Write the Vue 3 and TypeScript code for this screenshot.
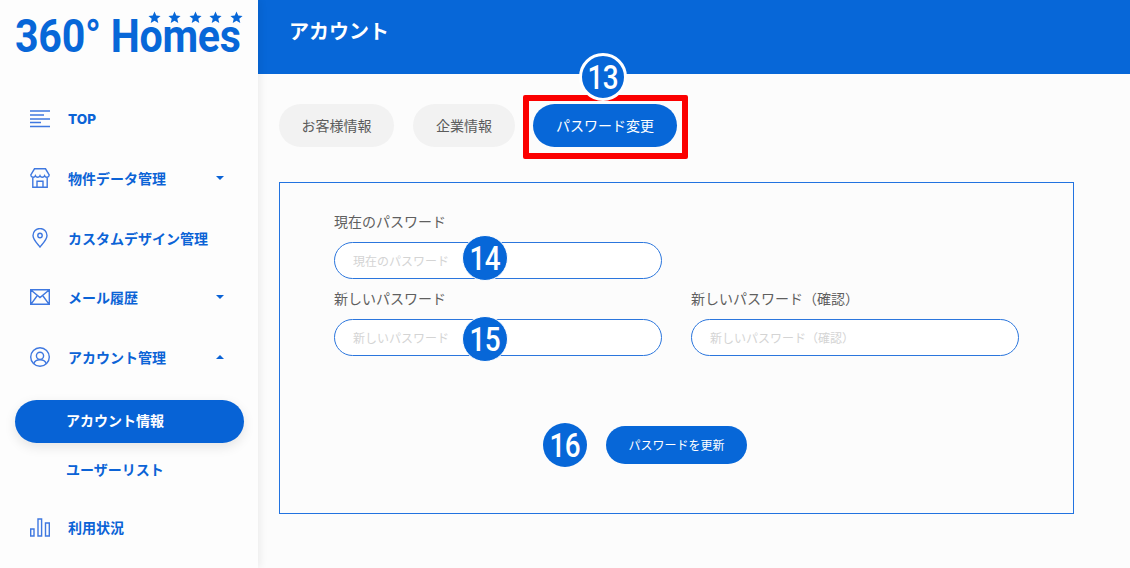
<script setup lang="ts">
const stars = [0, 1, 2, 3, 4]
</script>

<template>
  <div class="page">
    <aside class="sidebar">
      <div class="logo">
        <span class="logo-text">360° Homes</span>
        <span class="stars">
          <svg v-for="s in stars" :key="s" viewBox="0 0 24 24" width="13" height="13"><path fill="#0767d8" d="M12 1l3.200 7.400 8 .7-6.100 5.200 1.900 7.800L12 18l-7 4.100 1.900-7.800L.8 9.100l8-.7z" /></svg>
        </span>
      </div>
      <nav class="nav">
        <a class="item">
          <svg class="icon" viewBox="0 0 20 20"><path d="M0 2h20M0 6h14M0 10h20M0 13.500h11M0 17.500h20" /></svg>
          <span class="latin">TOP</span>
        </a>
        <a class="item">
          <svg class="icon" viewBox="0 0 20 20"><path d="M4.500 .8h11L19.200 7a2.400 2.400 0 0 1-4.600.8 2.500 2.500 0 0 1-4.600 0 2.500 2.500 0 0 1-4.600 0A2.400 2.400 0 0 1 .8 7zM2.800 10v9.300h14.400V10M7 19.300v-6h6v6" /></svg>
          <span>物件データ管理</span>
          <i class="caret" />
        </a>
        <a class="item">
          <svg class="icon" viewBox="0 0 20 20"><path d="M10 19C6.500 14.800 3 11.500 3 7.500a7 7 0 0 1 14 0c0 4-3.500 7.300-7 11.500z" /><circle cx="10" cy="7.500" r="2.200" /></svg>
          <span>カスタムデザイン管理</span>
        </a>
        <a class="item">
          <svg class="icon" viewBox="0 0 20 20"><path d="M.7 2.700h18.600v14.600H.7zM1.200 3.200 10 10.500l8.800-7.300M1.200 16.800 7 9M18.800 16.800 13 9" /></svg>
          <span>メール履歴</span>
          <i class="caret" />
        </a>
        <a class="item">
          <svg class="icon" viewBox="0 0 20 20"><circle cx="10" cy="10" r="9.300" /><circle cx="10" cy="8.800" r="3.600" /><path d="M3.800 16.800c.8-3 3.200-4 6.200-4s5.400 1 6.200 4" /></svg>
          <span>アカウント管理</span>
          <i class="caret up" />
        </a>
        <a class="sub active">アカウント情報</a>
        <a class="sub">ユーザーリスト</a>
        <a class="item last">
          <svg class="icon" viewBox="0 0 20 20"><path d="M.7 12h3.300v7H.7zM8 2h3.600v17H8zM15.500 6h3.800v13h-3.800z" /></svg>
          <span>利用状況</span>
        </a>
      </nav>
    </aside>

    <main class="main">
      <header class="topbar">アカウント</header>
      <div class="content">
        <div class="tabs">
          <button class="tab wide">お客様情報</button>
          <button class="tab narrow">企業情報</button>
          <div class="tab-mark">
            <button class="tab current">パスワード変更</button>
            <span class="red-box" />
            <span class="num num-13"><b>13</b></span>
          </div>
        </div>

        <section class="card">
          <div class="fields">
            <label class="field">
              <span class="label">現在のパスワード</span>
              <span class="input-wrap">
                <input class="input" placeholder="現在のパスワード" />
                <span class="num num-14"><b>14</b></span>
              </span>
            </label>
            <div class="row">
              <label class="field">
                <span class="label">新しいパスワード</span>
                <span class="input-wrap">
                  <input class="input" placeholder="新しいパスワード" />
                  <span class="num num-15"><b>15</b></span>
                </span>
              </label>
              <label class="field">
                <span class="label">新しいパスワード（確認）</span>
                <span class="input-wrap">
                  <input class="input" placeholder="新しいパスワード（確認）" />
                </span>
              </label>
            </div>
          </div>
          <div class="actions">
            <span class="submit-wrap">
              <button class="submit">パスワードを更新</button>
              <span class="num num-16"><b>16</b></span>
            </span>
          </div>
        </section>
      </div>
    </main>
  </div>
</template>

<style>
html, body { margin: 0; background: #fcfcfc; overflow: hidden; }
</style>

<style scoped>
.page {
  width: 1130px;
  height: 568px;
  display: flex;
  overflow: hidden;
  background: #fcfcfc;
  font-family: "Noto Sans CJK JP", "Noto Sans", sans-serif;
}
.sidebar {
  width: 258px;
  flex: none;
  background: #fdfdfd;
  box-shadow: 2px 0 8px rgba(0, 0, 0, 0.07);
  z-index: 1;
  padding-top: 11px;
  box-sizing: border-box;
}
.logo {
  position: relative;
  height: 78px;
  padding-left: 15px;
}
.logo-text {
  display: block;
  width: max-content;
  font-family: "Roboto", sans-serif;
  font-weight: 700;
  font-size: 47px;
  line-height: 50px;
  letter-spacing: -0.3px;
  color: #0767d8;
  white-space: nowrap;
  transform: scaleX(0.875);
  transform-origin: left center;
}
.stars {
  position: absolute;
  left: 148px;
  top: 0;
  display: flex;
  gap: 7.400px;
}
.nav {
  display: flex;
  flex-direction: column;
}
.item {
  height: 59.500px;
  display: flex;
  align-items: center;
  padding-left: 30px;
  color: #0b63d6;
  font-size: 14px;
  font-weight: 700;
  position: relative;
  box-sizing: border-box;
}
.item span { margin-left: 18px; }
.item .latin {
  font-family: "Inter", sans-serif;
  font-size: 13.500px;
  font-weight: 800;
}
.icon {
  width: 20px;
  height: 20px;
  flex: none;
  fill: none;
  stroke: #3f78e0;
  stroke-width: 1.400;
}
.caret {
  position: absolute;
  left: 216px;
  top: 50%;
  margin-top: -2px;
  border-left: 4px solid transparent;
  border-right: 4px solid transparent;
  border-top: 4px solid #0b63d6;
}
.caret.up {
  border-top: 0;
  border-bottom: 4px solid #0b63d6;
}
.sub {
  margin: 0 14px 0 15px;
  height: 43px;
  border-radius: 22px;
  display: flex;
  align-items: center;
  padding-left: 51px;
  padding-bottom: 2px;
  box-sizing: border-box;
  color: #0b63d6;
  font-size: 14px;
  font-weight: 700;
}
.sub.active {
  margin-top: 13px;
  background: #0763d6;
  color: #fff;
  box-shadow: 0 4px 12px rgba(0, 0, 0, 0.1);
}
.sub:not(.active) {
  margin-top: 6px;
}
.item.last { margin-top: 5.500px; }

.main {
  flex: 1;
  min-width: 0;
  display: flex;
  flex-direction: column;
}
.topbar {
  height: 74px;
  flex: none;
  background: #0767d8;
  color: #fff;
  font-size: 20px;
  font-weight: 700;
  line-height: 62px;
  padding-left: 31px;
}
.content {
  padding: 30px 56px 0 21px;
}
.tabs {
  display: flex;
  gap: 19px;
}
.tab {
  height: 43px;
  border: 0;
  border-radius: 22px;
  background: #f2f2f2;
  color: #5c5c5c;
  font: 400 14px "Noto Sans CJK JP", sans-serif;
  padding: 0 0 2px;
}
.wide { width: 115px; }
.narrow { width: 102px; }
.tab-mark { position: relative; margin-left: -1px; }
.current {
  width: 144px;
  background: #0767d8;
  color: #fff;
  display: block;
}
.red-box {
  position: absolute;
  left: -10px;
  top: -9px;
  width: 153px;
  height: 52px;
  border: 6px solid #fb0000;
  border-radius: 2px;
}
.num {
  position: absolute;
  width: 44px;
  height: 44px;
  border-radius: 50%;
  background: #0767d8;
  color: #fff;
  display: flex;
  align-items: center;
  justify-content: center;
  font-family: "Roboto", sans-serif;
  font-size: 34px;
  letter-spacing: -0.5px;
}
.num b {
  display: block;
  font-weight: 500;
  transform: scaleX(0.82);
}
.num-13 {
  width: 42px;
  height: 42px;
  left: 46px;
  top: -51px;
  border: 3px solid #fff;
  z-index: 2;
}
.num-14, .num-15 {
  left: 128px;
  border: 1px solid #fff;
}
.num-14 { top: -7px; }
.num-15 { top: -3px; }
.num-16 {
  left: -63px;
  top: -3px;
}
.card {
  margin-top: 35px;
  width: 795px;
  height: 332px;
  box-sizing: border-box;
  border: 1px solid #2273e0;
  display: flex;
  flex-direction: column;
  padding: 28px 54px 0;
}
.fields {
  display: flex;
  flex-direction: column;
  gap: 9px;
}
.row {
  display: flex;
  gap: 29px;
}
.field {
  width: 328px;
  display: flex;
  flex-direction: column;
  gap: 10px;
}
.label {
  font-size: 14px;
  line-height: 21px;
  color: #5f5f5f;
}
.input-wrap {
  position: relative;
  display: block;
  height: 37px;
}
.input {
  width: 100%;
  height: 37px;
  box-sizing: border-box;
  border: 1px solid #2b76dd;
  border-radius: 19px;
  background: #fff;
  outline: 0;
  padding: 0 18px;
  font: 400 12px "Noto Sans CJK JP", sans-serif;
}
.input::placeholder {
  color: #d4d4d4;
  opacity: 1;
}
.actions {
  margin-top: 70px;
  display: flex;
  justify-content: center;
}
.submit-wrap { position: relative; display: block; }
.submit {
  display: block;
  width: 141px;
  height: 38px;
  border: 0;
  border-radius: 19px;
  background: #0767d8;
  color: #fff;
  padding: 0 0 2px;
  font: 400 12px "Noto Sans CJK JP", sans-serif;
}
</style>
